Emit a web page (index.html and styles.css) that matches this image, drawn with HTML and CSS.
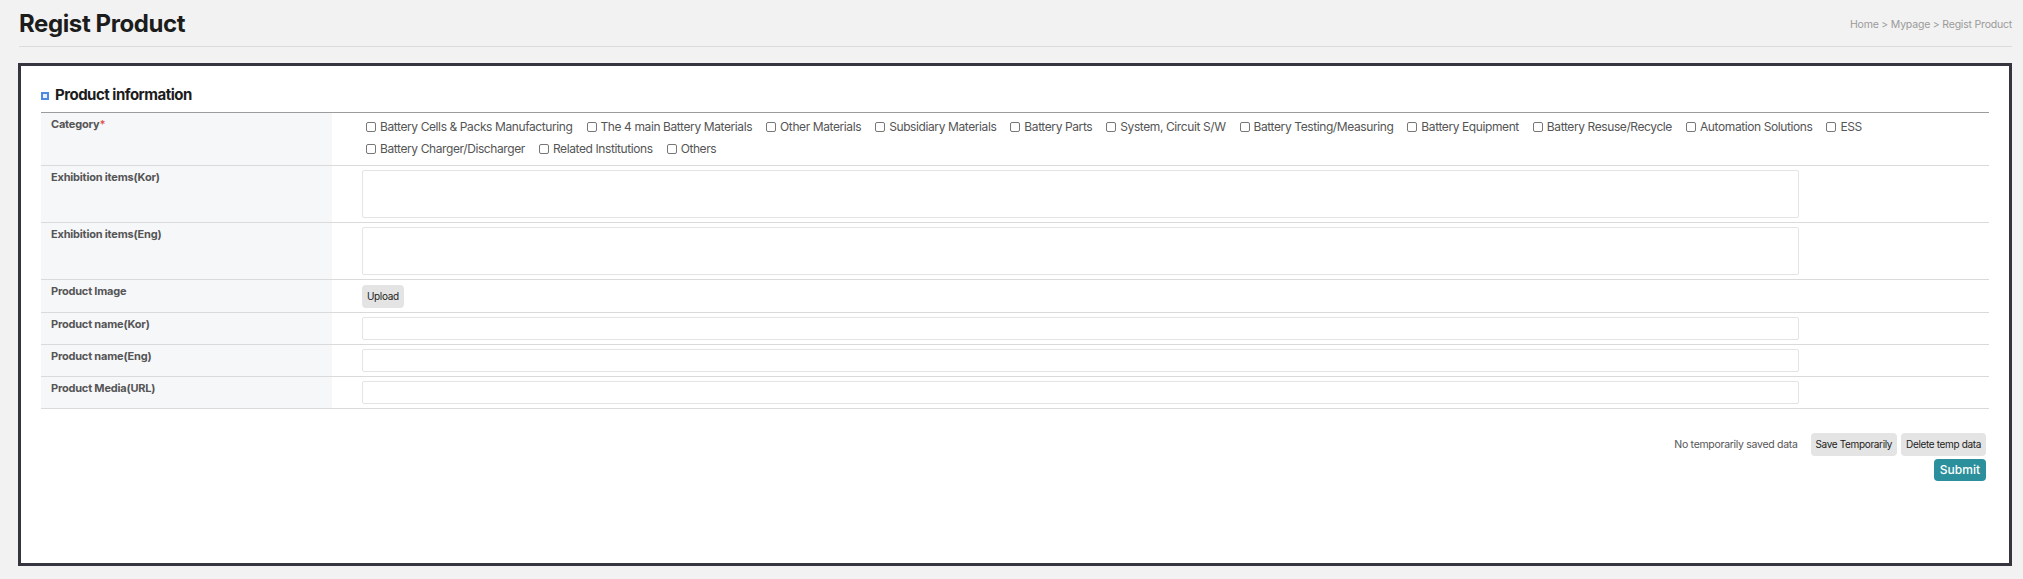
FILE: index.html
```html
<!DOCTYPE html>
<html>
  <head>
    <title>Regist Product</title>
    <link rel="stylesheet" href="styles.css">
    <meta name="viewport" content="width=device-width, initial-scale=1" />
  </head>
  <body>
    <div class="page">
      <div class="page-head">
        <h1>Regist Product</h1>
        <div class="crumb">Home &gt; Mypage &gt; Regist Product</div>
      </div>

      <div class="panel">
        <h2 class="sec-title"><span class="sq"></span>Product information</h2>

        <table class="form-table">
          <tr>
            <th>Category<span class="req">*</span></th>
            <td class="cats">
              <div class="cat-list">
                <label><input type="checkbox" />Battery Cells &amp; Packs Manufacturing</label>
                <label><input type="checkbox" />The 4 main Battery Materials</label>
                <label><input type="checkbox" />Other Materials</label>
                <label><input type="checkbox" />Subsidiary Materials</label>
                <label><input type="checkbox" />Battery Parts</label>
                <label><input type="checkbox" />System, Circuit S/W</label>
                <label><input type="checkbox" />Battery Testing/Measuring</label>
                <label><input type="checkbox" />Battery Equipment</label>
                <label><input type="checkbox" />Battery Resuse/Recycle</label>
                <label><input type="checkbox" />Automation Solutions</label>
                <label><input type="checkbox" />ESS</label>
                <label><input type="checkbox" />Battery Charger/Discharger</label>
                <label><input type="checkbox" />Related Institutions</label>
                <label><input type="checkbox" />Others</label>
              </div>
            </td>
          </tr>
          <tr>
            <th>Exhibition items(Kor)</th>
            <td><textarea></textarea></td>
          </tr>
          <tr>
            <th>Exhibition items(Eng)</th>
            <td><textarea></textarea></td>
          </tr>
          <tr>
            <th>Product Image</th>
            <td><button class="btn">Upload</button></td>
          </tr>
          <tr>
            <th>Product name(Kor)</th>
            <td><input class="txt" type="text" /></td>
          </tr>
          <tr>
            <th>Product name(Eng)</th>
            <td><input class="txt" type="text" /></td>
          </tr>
          <tr>
            <th>Product Media(URL)</th>
            <td><input class="txt" type="text" /></td>
          </tr>
        </table>

        <div class="actions">
          <div class="temp-row">
            <span class="temp-msg">No temporarily saved data</span>
            <button class="btn">Save Temporarily</button>
            <button class="btn">Delete temp data</button>
          </div>
          <button class="submit">Submit</button>
        </div>
      </div>
    </div>
  </body>
</html>
```

FILE: styles.css
```css
body {
  margin: 0;
  background: #f2f2f2;
  font-family: Inter, "Noto Sans", sans-serif;
  color: #222;
}
.page {
  padding: 0 11px 0 18px;
}
.page-head {
  display: flex;
  justify-content: space-between;
  align-items: center;
  height: 46px;
  margin-left: 1px;
  border-bottom: 1px solid #dcdcdc;
}
.page-head h1 {
  margin: 0;
  font-size: 24px;
  font-weight: 700;
  letter-spacing: -0.4px;
  color: #1c1c1c;
}
.page-head .crumb {
  font-size: 10.5px;
  color: #9a9a9a;
  letter-spacing: -0.2px;
  margin-top: 3px;
}
.panel {
  margin-top: 16px;
  height: 503px;
  box-sizing: border-box;
  border: 3px solid #35353f;
  background: #fff;
  padding: 19px 20px 0 20px;
}
.sec-title {
  display: flex;
  align-items: center;
  gap: 6px;
  margin: 0 0 7px 0;
  font-size: 15px;
  line-height: 20px;
  font-weight: 700;
  letter-spacing: -0.5px;
  color: #1c1c1c;
}
.sec-title .sq {
  position: relative;
  width: 8px;
  height: 8px;
  margin-top: 2px;
  background: #4d89e4;
}
.sec-title .sq:after {
  content: "";
  position: absolute;
  left: 2px;
  top: 2px;
  width: 4px;
  height: 4px;
  background: #e8f0fc;
}
.form-table {
  width: 100%;
  border-collapse: collapse;
  border-top: 1px solid #9c9c9c;
}
.form-table th {
  width: 271px;
  padding: 5px 10px;
  background: #f6f7f9;
  text-align: left;
  vertical-align: top;
  font-size: 11px;
  line-height: 13px;
  font-weight: 700;
  color: #555;
  letter-spacing: -0.2px;
  border-bottom: 1px solid #dadada;
}
.form-table th .req {
  color: #e05555;
}
.form-table td {
  padding: 4px 0 4px 30px;
  vertical-align: top;
  border-bottom: 1px solid #dadada;
}
.form-table td.cats {
  padding: 3px 0 5px 30px;
}
.cat-list {
  display: flex;
  flex-wrap: wrap;
  font-size: 12px;
  line-height: 22px;
  color: #555;
  letter-spacing: -0.4px;
}
.cat-list label {
  display: flex;
  align-items: center;
  margin-right: 10px;
  white-space: nowrap;
}
.cat-list input {
  appearance: none;
  width: 10px;
  height: 10px;
  margin: 0 4px 0 4px;
  border: 1px solid #777;
  border-radius: 2px;
  background: #fff;
}
.form-table textarea {
  display: block;
  width: 1437px;
  height: 48px;
  box-sizing: border-box;
  border: 1px solid #e4e4e4;
  border-radius: 2px;
  resize: none;
}
.form-table .txt {
  display: block;
  width: 1437px;
  height: 23px;
  box-sizing: border-box;
  border: 1px solid #e4e4e4;
  border-radius: 2px;
}
.btn {
  height: 23px;
  padding: 0 5px;
  border: 0;
  border-radius: 4px;
  background: #e4e4e4;
  font-family: Inter, "Noto Sans", sans-serif;
  font-size: 10px;
  letter-spacing: -0.35px;
  color: #222;
}
.actions {
  display: flex;
  flex-direction: column;
  align-items: flex-end;
  gap: 3px;
  margin: 24px 3px 0 0;
}
.temp-row {
  display: flex;
  align-items: center;
  gap: 4px;
}
.temp-msg {
  margin-right: 9px;
  font-size: 10.5px;
  color: #555;
  letter-spacing: -0.3px;
}
.submit {
  height: 22px;
  padding: 0 6px;
  border: 0;
  border-radius: 4px;
  background: #2c8f9c;
  color: #fff;
  font-family: Inter, "Noto Sans", sans-serif;
  font-size: 12px;
  font-weight: 500;
}
```
